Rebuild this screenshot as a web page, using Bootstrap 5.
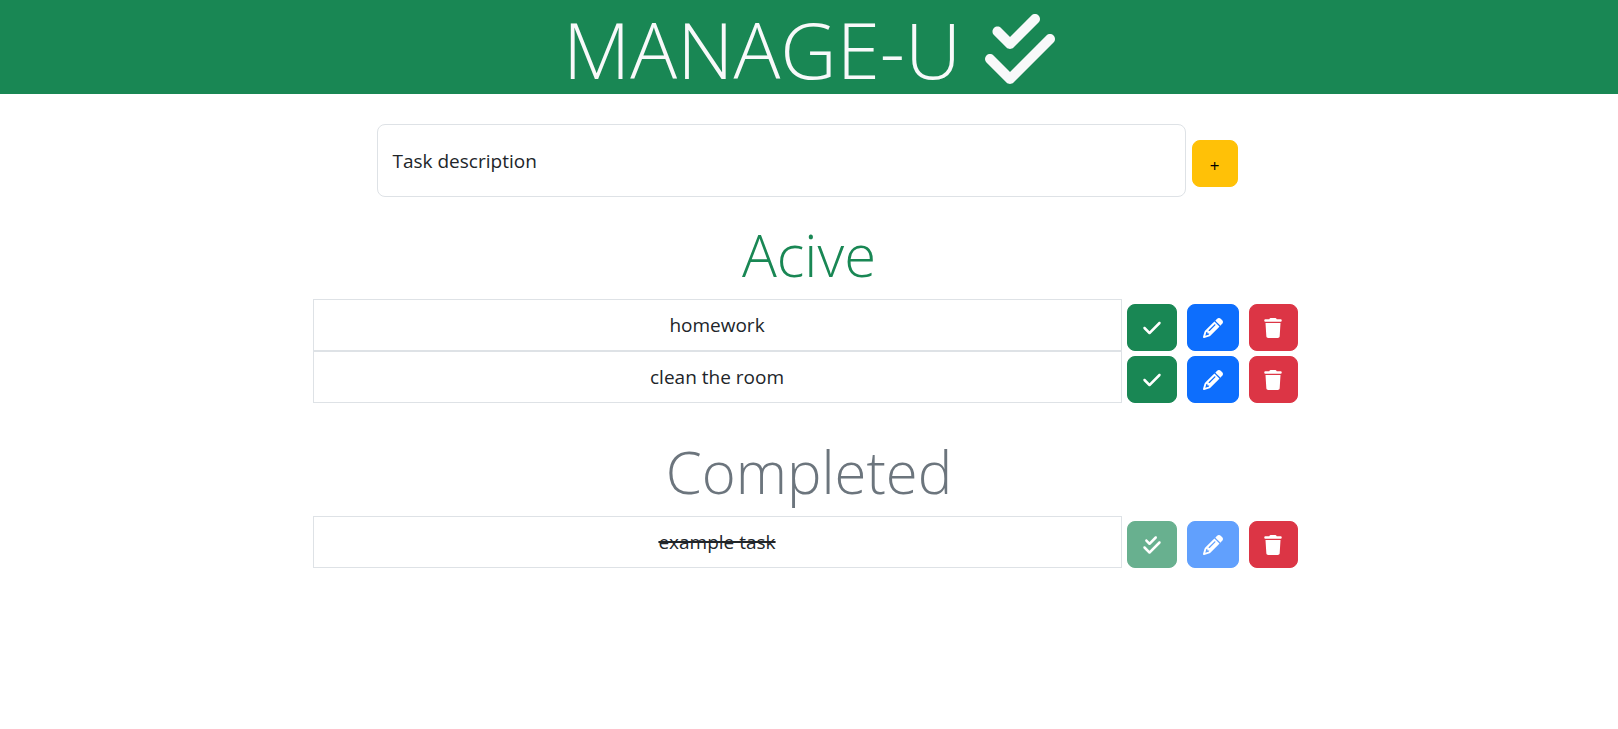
<!DOCTYPE html>
<html lang="en">
<head>
<meta charset="utf-8">
<meta name="viewport" content="width=device-width, initial-scale=1">
<title>Manage-U</title>
<link href="https://cdn.jsdelivr.net/npm/bootstrap@5.3.0/dist/css/bootstrap.min.css" rel="stylesheet">
<style>
  body { font-family: "Open Sans", "Noto Sans", sans-serif; font-size: 19px; line-height: 30px; }
  .brand { font-size: 78px; line-height: 90px; font-weight: 300; padding-top: 4px; }
  .brand svg { width: 70px; height: 80px; }
  .section-title { font-size: 58px; line-height: 72px; font-weight: 300; }
  .half { width: 50%; }
  .task-form { gap: 6px; margin-top: 30px; }
  .form-floating > .new-task { height: 73px; font-size: 19px; border-radius: 8px; padding: 0 15px; }
  .form-floating > .new-task-label { display: flex; align-items: center; height: 100%; padding: 0 15px; }
  .tool { height: 47px; border-radius: 8px; padding: 0; font-size: 19px; line-height: 1; display: flex; align-items: center; justify-content: center; }
  .tool svg { height: 20px; }
  .add { width: 46px; padding-top: 4px; font-size: 17px; margin: 6px 4px 0 0; }
  .done { width: 50px; }
  .edit { width: 52px; }
  .trash { width: 49px; }
  .active-list { margin-top: 22px; }
  .completed-list { margin-top: 33px; }
  .task-row { gap: 5px; }
  .task-text { height: 52px; }
  .task-tools { gap: 10px; margin-right: 8px; }
  .task-text s { text-decoration-thickness: 2px; }
</style>
</head>
<body>
<svg class="d-none" aria-hidden="true">
  <symbol id="check" viewBox="0 0 448 512"><path d="M438.6 105.4c12.5 12.5 12.5 32.8 0 45.3l-256 256c-12.5 12.5-32.8 12.5-45.3 0l-128-128c-12.5-12.5-12.5-32.8 0-45.3s32.8-12.5 45.3 0L160 338.7 393.4 105.4c12.5-12.5 32.8-12.5 45.3 0z"/></symbol>
  <symbol id="double" viewBox="0 0 448 512"><path d="M342.6 86.6c12.5-12.5 12.5-32.8 0-45.3s-32.8-12.5-45.3 0L160 178.7l-57.4-57.4c-12.5-12.5-32.8-12.5-45.3 0s-12.5 32.8 0 45.3l80 80c12.5 12.5 32.8 12.5 45.3 0l160-160zm96 128c12.5-12.5 12.5-32.8 0-45.3s-32.8-12.5-45.3 0L160 402.7 54.6 297.4c-12.5-12.5-32.8-12.5-45.3 0s-12.5 32.8 0 45.3l128 128c12.5 12.5 32.8 12.5 45.3 0l256-256z"/></symbol>
  <symbol id="pencil" viewBox="0 0 512 512"><path d="M410.3 231l11.3-11.3-33.9-33.9-62.1-62.1L291.7 89.8l-11.3 11.3-22.6 22.6L58.6 322.9c-10.4 10.4-18 23.3-22.2 37.4L1 480.7c-2.5 8.4-.2 17.5 6.1 23.7s15.3 8.5 23.7 6.1l120.3-35.4c14.1-4.2 27-11.8 37.4-22.2L387.7 253.7 410.3 231zM160 399.4l-9.1 22.7c-4 3.1-8.5 5.4-13.3 6.9L59.4 452l23-78.1c1.4-4.9 3.8-9.4 6.9-13.3l22.7-9.1v32c0 8.8 7.2 16 16 16h32zM362.7 18.7L348.3 33.2 325.7 55.8 314.3 67.1l33.9 33.9 62.1 62.1 33.9 33.9 11.3-11.3 22.6-22.6 14.5-14.5c25-25 25-65.5 0-90.5L453.3 18.7c-25-25-65.5-25-90.5 0zm-47.4 168l-144 144c-6.2 6.2-16.4 6.2-22.6 0s-6.2-16.4 0-22.6l144-144c6.2-6.2 16.4-6.2 22.6 0s6.2 16.4 0 22.6z"/></symbol>
  <symbol id="bin" viewBox="0 0 448 512"><path d="M135.2 17.7L128 32H32C14.3 32 0 46.3 0 64S14.3 96 32 96H416c17.7 0 32-14.3 32-32s-14.3-32-32-32H320l-7.2-14.3C307.4 6.8 296.3 0 284.2 0H163.8c-12.1 0-23.2 6.8-28.6 17.7zM416 128H32L53.2 467c1.6 25.3 22.6 45 47.9 45H346.9c25.3 0 46.3-19.7 47.9-45L416 128z"/></symbol>
</svg>

<header class="bg-success text-light">
  <h1 class="brand d-flex justify-content-center align-items-center gap-4 mb-0">
    <span>MANAGE-U</span>
    <svg fill="currentColor" aria-hidden="true"><use href="#double"/></svg>
  </h1>
</header>

<main>
  <form class="task-form d-flex justify-content-center align-items-center">
    <div class="form-floating half">
      <input id="task" type="text" class="form-control new-task" placeholder=" ">
      <label class="new-task-label" for="task">Task description</label>
    </div>
    <button type="button" class="btn btn-warning tool add" aria-label="Add task">+</button>
  </form>

  <section class="active-list">
    <h2 class="section-title text-success text-center mb-2">Acive</h2>
    <div class="task-row d-flex justify-content-center align-items-end">
      <div class="half task-text border d-flex align-items-center justify-content-center">homework</div>
      <div class="task-tools d-flex">
        <button type="button" class="btn btn-success tool done" aria-label="Complete"><svg width="18" fill="currentColor"><use href="#check"/></svg></button>
        <button type="button" class="btn btn-primary tool edit" aria-label="Edit"><svg width="20" fill="currentColor"><use href="#pencil"/></svg></button>
        <button type="button" class="btn btn-danger tool trash" aria-label="Delete"><svg width="18" fill="currentColor"><use href="#bin"/></svg></button>
      </div>
    </div>
    <div class="task-row d-flex justify-content-center align-items-end">
      <div class="half task-text border d-flex align-items-center justify-content-center">clean the room</div>
      <div class="task-tools d-flex">
        <button type="button" class="btn btn-success tool done" aria-label="Complete"><svg width="18" fill="currentColor"><use href="#check"/></svg></button>
        <button type="button" class="btn btn-primary tool edit" aria-label="Edit"><svg width="20" fill="currentColor"><use href="#pencil"/></svg></button>
        <button type="button" class="btn btn-danger tool trash" aria-label="Delete"><svg width="18" fill="currentColor"><use href="#bin"/></svg></button>
      </div>
    </div>
  </section>

  <section class="completed-list">
    <h2 class="section-title text-secondary text-center mb-2">Completed</h2>
    <div class="task-row d-flex justify-content-center align-items-end">
      <div class="half task-text border d-flex align-items-center justify-content-center"><s>example task</s></div>
      <div class="task-tools d-flex">
        <button type="button" class="btn btn-success tool done" aria-label="Completed" disabled><svg width="18" fill="currentColor"><use href="#double"/></svg></button>
        <button type="button" class="btn btn-primary tool edit" aria-label="Edit" disabled><svg width="20" fill="currentColor"><use href="#pencil"/></svg></button>
        <button type="button" class="btn btn-danger tool trash" aria-label="Delete"><svg width="18" fill="currentColor"><use href="#bin"/></svg></button>
      </div>
    </div>
  </section>
</main>
<script src="https://cdn.jsdelivr.net/npm/bootstrap@5.3.0/dist/js/bootstrap.bundle.min.js"></script>
</body>
</html>
